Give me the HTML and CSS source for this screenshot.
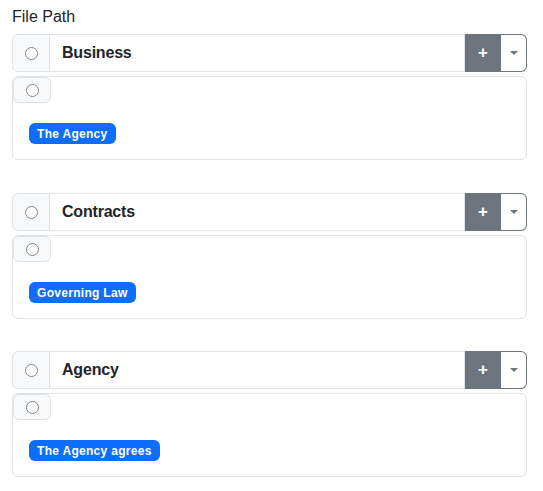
FILE: index.html
```html
<!DOCTYPE html>
<html>
<head>
<meta charset="utf-8">
<link rel="stylesheet" href="styles.css">
</head>
<body>
<div class="label">File Path</div>

<div class="section">
  <div class="group">
    <div class="addon"><span class="radio"></span></div>
    <div class="name">Business</div>
    <div class="plus">+</div>
    <div class="toggle"><span class="caret"></span></div>
  </div>
  <div class="card">
    <div class="mini"><span class="radio"></span></div>
    <span class="badge">The Agency</span>
  </div>
</div>

<div class="section">
  <div class="group">
    <div class="addon"><span class="radio"></span></div>
    <div class="name">Contracts</div>
    <div class="plus">+</div>
    <div class="toggle"><span class="caret"></span></div>
  </div>
  <div class="card">
    <div class="mini"><span class="radio"></span></div>
    <span class="badge">Governing Law</span>
  </div>
</div>

<div class="section">
  <div class="group">
    <div class="addon"><span class="radio"></span></div>
    <div class="name">Agency</div>
    <div class="plus">+</div>
    <div class="toggle"><span class="caret"></span></div>
  </div>
  <div class="card">
    <div class="mini"><span class="radio"></span></div>
    <span class="badge">The Agency agrees</span>
  </div>
</div>
</body>
</html>
```

FILE: styles.css
```css
* { box-sizing: border-box; }
html, body { background: #fff; }
body {
  margin: 0;
  padding: 8px 16px 0 12px;
  font-family: "Liberation Sans", Arial, sans-serif;
  color: #212529;
}
.label {
  font-size: 16px;
  line-height: 17px;
  margin-bottom: 9px;
}
.section { margin-bottom: 33px; }
.section:nth-child(3) { margin-bottom: 32px; }
.group {
  display: flex;
  height: 38px;
}
.addon {
  width: 38px;
  background: #f8f9fa;
  border: 1px solid #dee2e6;
  border-radius: 6px 0 0 6px;
  display: flex;
  align-items: center;
  justify-content: center;
}
.radio {
  display: block;
  width: 13px;
  height: 13px;
  border: 1px solid #858585;
  border-radius: 50%;
  background: #fff;
}
.name {
  flex: 1;
  border: 1px solid #dee2e6;
  border-left: none;
  padding-left: 12px;
  display: flex;
  align-items: center;
  font-size: 16px;
  font-weight: bold;
  letter-spacing: -0.2px;
}
.plus {
  width: 36px;
  background: #6c757d;
  color: #fff;
  display: flex;
  align-items: center;
  justify-content: center;
  font-size: 17px;
  font-weight: bold;
}
.toggle {
  width: 26px;
  background: #fff;
  border: 1px solid #6c757d;
  border-left: none;
  border-radius: 0 6px 6px 0;
  display: flex;
  align-items: center;
  justify-content: center;
}
.caret {
  display: block;
  width: 0;
  height: 0;
  border-left: 4px solid transparent;
  border-right: 4px solid transparent;
  border-top: 4px solid #6c757d;
}
.card {
  margin-top: 4px;
  height: 84px;
  border: 1px solid #dee2e6;
  border-radius: 6px;
  display: flex;
  flex-direction: column;
  align-items: flex-start;
}
.mini {
  width: 38px;
  height: 26px;
  background: #f8f9fa;
  border: 1px solid #dee2e6;
  border-radius: 6px;
  display: flex;
  align-items: center;
  justify-content: center;
}
.badge {
  margin-top: 20px;
  margin-left: 16px;
  height: 21px;
  padding: 0 8px;
  background: #0d6efd;
  color: #fff;
  border-radius: 6px;
  font-size: 12px;
  font-weight: bold;
  letter-spacing: 0.3px;
  display: flex;
  align-items: center;
}
```
